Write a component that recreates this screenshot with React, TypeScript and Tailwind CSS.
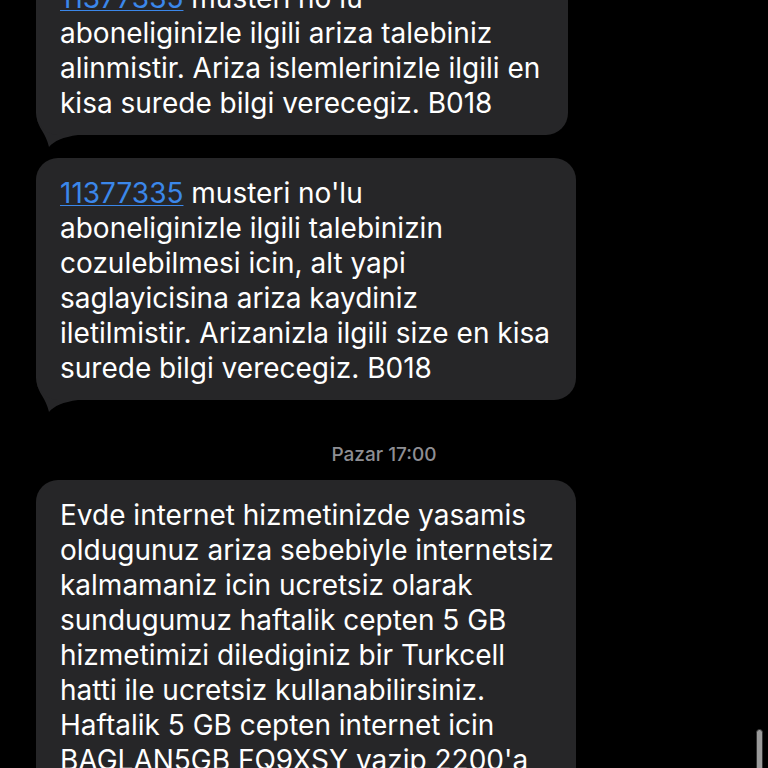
import React from 'react';

const font = { fontFamily: 'Inter, "Liberation Sans", sans-serif' };

function Tail() {
  return (
    <svg
      className="absolute left-0 bottom-[-13px]"
      width="44"
      height="30"
      viewBox="0 0 44 30"
    >
      <path d="M1 0 C2 10 10 15 13 29 C18 23 27 19 42 17 L42 0 Z" fill="#262628" />
    </svg>
  );
}

function Bubble({ lines, width, className = '' }: { lines: React.ReactNode[]; width: string; className?: string }) {
  return (
    <div className={`relative ml-[36px] ${width} ${className}`}>
      <div className="relative z-10 rounded-[22px] bg-[#262628] px-6 pt-[18px] pb-[14px] text-[28px] leading-[35px] text-white">
        {lines.map((l, i) => (
          <div key={i} className="whitespace-nowrap">
            {l}
          </div>
        ))}
      </div>
      <Tail />
    </div>
  );
}

const Link = () => (
  <span className="text-[#3b87ea] underline underline-offset-[2px] decoration-[1px]">11377335</span>
);

export default function App() {
  return (
    <div className="relative h-[768px] w-[768px] overflow-hidden bg-black" style={font}>
      <div className="flex flex-col mt-[-37px]">
        <Bubble
          width="w-[532px]"
          lines={[
            <>
              <Link /> musteri no'lu
            </>,
            'aboneliginizle ilgili ariza talebiniz',
            'alinmistir. Ariza islemlerinizle ilgili en',
            'kisa surede bilgi verecegiz. B018',
          ]}
        />
        <Bubble
          width="w-[540px]"
          className="mt-[23px]"
          lines={[
            <>
              <Link /> musteri no'lu
            </>,
            'aboneliginizle ilgili talebinizin',
            'cozulebilmesi icin, alt yapi',
            'saglayicisina ariza kaydiniz',
            'iletilmistir. Arizanizla ilgili size en kisa',
            'surede bilgi verecegiz. B018',
          ]}
        />
        <div className="mt-[43px] h-[24px] text-center text-[19px] leading-[24px] font-medium text-[#8e8e93]">
          Pazar 17:00
        </div>
        <Bubble
          width="w-[540px]"
          className="mt-[13px]"
          lines={[
            'Evde internet hizmetinizde yasamis',
            'oldugunuz ariza sebebiyle internetsiz',
            'kalmamaniz icin ucretsiz olarak',
            'sundugumuz haftalik cepten 5 GB',
            'hizmetimizi dilediginiz bir Turkcell',
            'hatti ile ucretsiz kullanabilirsiniz.',
            'Haftalik 5 GB cepten internet icin',
            "BAGLAN5GB FQ9XSY yazip 2200'a",
            'gondermeniz yeterlidir.',
          ]}
        />
      </div>
      <div className="absolute left-[756px] top-[729px] h-[60px] w-[7px] rounded-full border border-[#333] bg-[#9a9a9a]" />
    </div>
  );
}
